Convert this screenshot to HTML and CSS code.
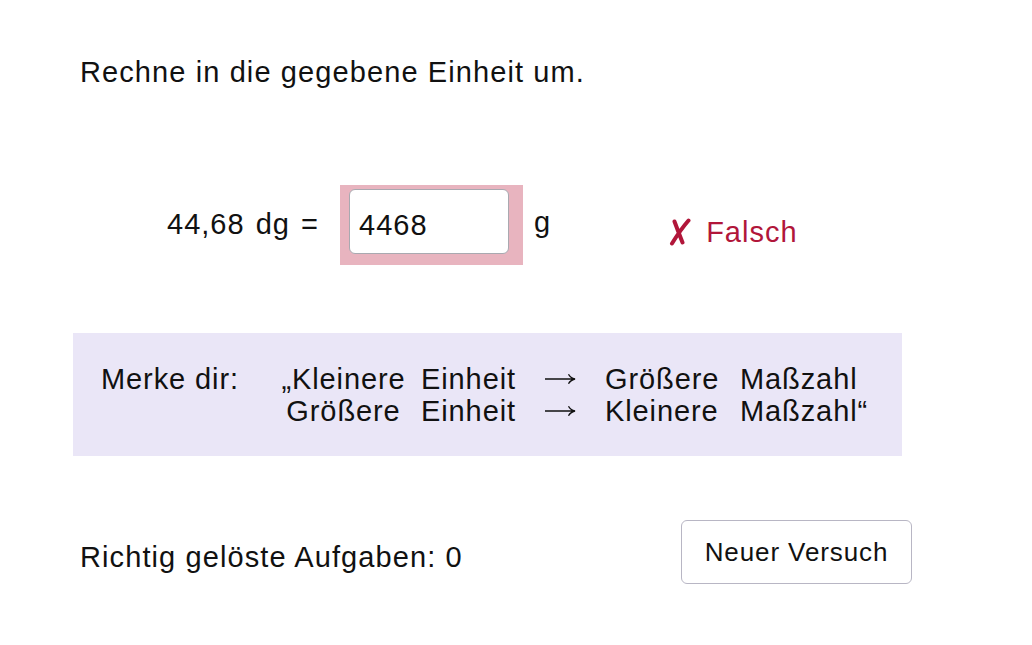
FILE: index.html
```html
<!DOCTYPE html>
<html lang="de">
<head>
  <meta charset="UTF-8" />
  <title>Einheiten umrechnen</title>
  <link rel="stylesheet" href="styles.css">
</head>
<body>
  <div class="page">
    <p class="task">Rechne in die gegebene Einheit um.</p>

    <div class="exercise">
      <span class="given">44,68 dg =</span>
      <div class="answer-box wrong">
        <input type="text" id="answer" value="4468">
      </div>
      <span class="unit">g</span>
      <span class="feedback">
        <svg class="cross" width="24" height="30" viewBox="0 0 24 30"><path d="M21.5 3.5Q14 12 5 26.5M7.5 4.5Q11 14 15.5 25.5" fill="none" stroke="#b1163a" stroke-width="4" stroke-linecap="round"/></svg>
        Falsch
      </span>
    </div>

    <div class="hint">
      <span class="hint-label">Merke dir:</span>
      <span class="w-a">„Kleinere</span>
      <span class="w-b">Einheit</span>
      <span class="arrow">
        <svg width="31" height="14" viewBox="0 0 31 14"><path d="M0 7H29.5M23.5 2.2Q25.3 5.8 30 7Q25.3 8.2 23.5 11.8" fill="none" stroke="#111" stroke-width="1.3"/></svg>
      </span>
      <span class="w-c">Größere</span>
      <span class="w-d">Maßzahl</span>

      <span class="w-a">Größere</span>
      <span class="w-b">Einheit</span>
      <span class="arrow">
        <svg width="31" height="14" viewBox="0 0 31 14"><path d="M0 7H29.5M23.5 2.2Q25.3 5.8 30 7Q25.3 8.2 23.5 11.8" fill="none" stroke="#111" stroke-width="1.3"/></svg>
      </span>
      <span class="w-c">Kleinere</span>
      <span class="w-d">Maßzahl“</span>
    </div>

    <div class="footer">
      <span class="score">Richtig gelöste Aufgaben: <span id="count">0</span></span>
      <button class="retry">Neuer Versuch</button>
    </div>
  </div>
</body>
</html>
```

FILE: styles.css
```css
body {
  font-family: "Liberation Sans", Arial, sans-serif;
  margin: 0;
  background-color: #fff;
  color: #111;
}
.page {
  width: 860px;
  padding: 52px 0 0 73px;
}
.task {
  font-size: 29px;
  letter-spacing: 1.1px;
  margin: 0 0 0 7px;
  line-height: 40px;
}
.exercise {
  display: flex;
  align-items: flex-start;
  margin-top: 93px;
  height: 80px;
  font-size: 29px;
  letter-spacing: 1px;
}
.given {
  margin-left: 94px;
  margin-top: 23px;
  width: 173px;
  word-spacing: 2px;
}
.answer-box {
  width: 183px;
  height: 80px;
  padding: 4px 14px 0 9px;
  box-sizing: border-box;
}
.answer-box.wrong {
  background-color: #e8b4bf;
}
.answer-box input {
  width: 100%;
  height: 65px;
  box-sizing: border-box;
  border: 1px solid #a9a9b0;
  border-radius: 6px;
  background: #fff;
  padding: 8px 9px 0;
  font-family: "Liberation Sans", Arial, sans-serif;
  font-size: 29px;
  letter-spacing: 1px;
  color: #111;
  outline: none;
}
.unit {
  margin-left: 11px;
  margin-top: 21px;
}
.feedback {
  display: flex;
  align-items: center;
  margin-left: 116px;
  margin-top: 31px;
  color: #b1163a;
}
.cross {
  margin-right: 15px;
  margin-top: -2px;
}
.hint {
  display: grid;
  grid-template-columns: 165px 155px 124px 60px 135px auto;
  align-items: center;
  margin-top: 68px;
  width: 829px;
  box-sizing: border-box;
  padding: 30px 28px 29px;
  background-color: #eae6f7;
  font-size: 29px;
  letter-spacing: 0.9px;
  line-height: 32px;
}
.hint-label {
  grid-row: span 2;
  align-self: start;
}
.w-a {
  text-align: center;
}
.arrow {
  display: flex;
  align-items: center;
  height: 32px;
}
.footer {
  display: flex;
  justify-content: space-between;
  align-items: center;
  margin-top: 64px;
  width: 832px;
  padding-left: 7px;
}
.score {
  font-size: 29px;
  letter-spacing: 1.1px;
  padding-top: 10px;
}
.retry {
  width: 231px;
  height: 64px;
  background: #fff;
  border: 1px solid #b8b6c4;
  border-radius: 6px;
  font-family: "Liberation Sans", Arial, sans-serif;
  font-size: 26px;
  letter-spacing: 0.9px;
  color: #111;
  cursor: pointer;
}
```
